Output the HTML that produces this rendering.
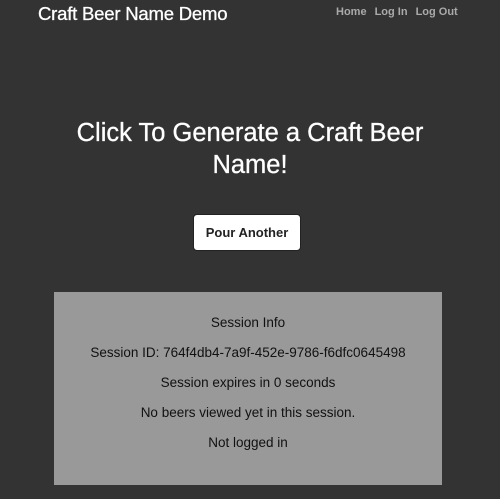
<!DOCTYPE html>
<html><head><style>
body{margin:0;width:500px;height:499px;background:#333;font-family:"Liberation Sans",sans-serif;position:relative;overflow:hidden}
.t{position:absolute;left:38px;top:3px;color:#fff;font-size:18.5px;letter-spacing:-0.2px;-webkit-text-stroke:0.3px #fff}
.nav{position:absolute;left:336px;top:6px;color:#aaa;font-size:11px;font-weight:bold}
.nav span{margin-right:8px}
h1{position:absolute;left:0;width:500px;top:117px;margin:0;text-align:center;color:#fff;font-weight:normal;font-size:25.5px;line-height:32px;-webkit-text-stroke:0.3px #fff}
.b{position:absolute;left:193px;top:214px;width:108px;height:37px;background:#fff;border:1px solid #222;border-radius:4px;box-sizing:border-box;text-align:center;line-height:35px;font-size:13px;font-weight:bold;color:#222}
.box{position:absolute;left:54px;top:292px;width:388px;height:193px;background:#999;text-align:center;color:#111;font-size:13.5px}
.box p{margin:0;position:absolute;width:100%}
</style></head><body>
<div class="t">Craft Beer Name Demo</div>
<div class="nav"><span>Home</span><span>Log In</span><span>Log Out</span></div>
<h1>Click To Generate a Craft Beer<br>Name!</h1>
<div class="b">Pour Another</div>
<div class="box">
<p style="top:23px">Session Info</p>
<p style="top:53px">Session ID: 764f4db4-7a9f-452e-9786-f6dfc0645498</p>
<p style="top:83px">Session expires in 0 seconds</p>
<p style="top:113px">No beers viewed yet in this session.</p>
<p style="top:143px">Not logged in</p>
</div>
</body></html>
